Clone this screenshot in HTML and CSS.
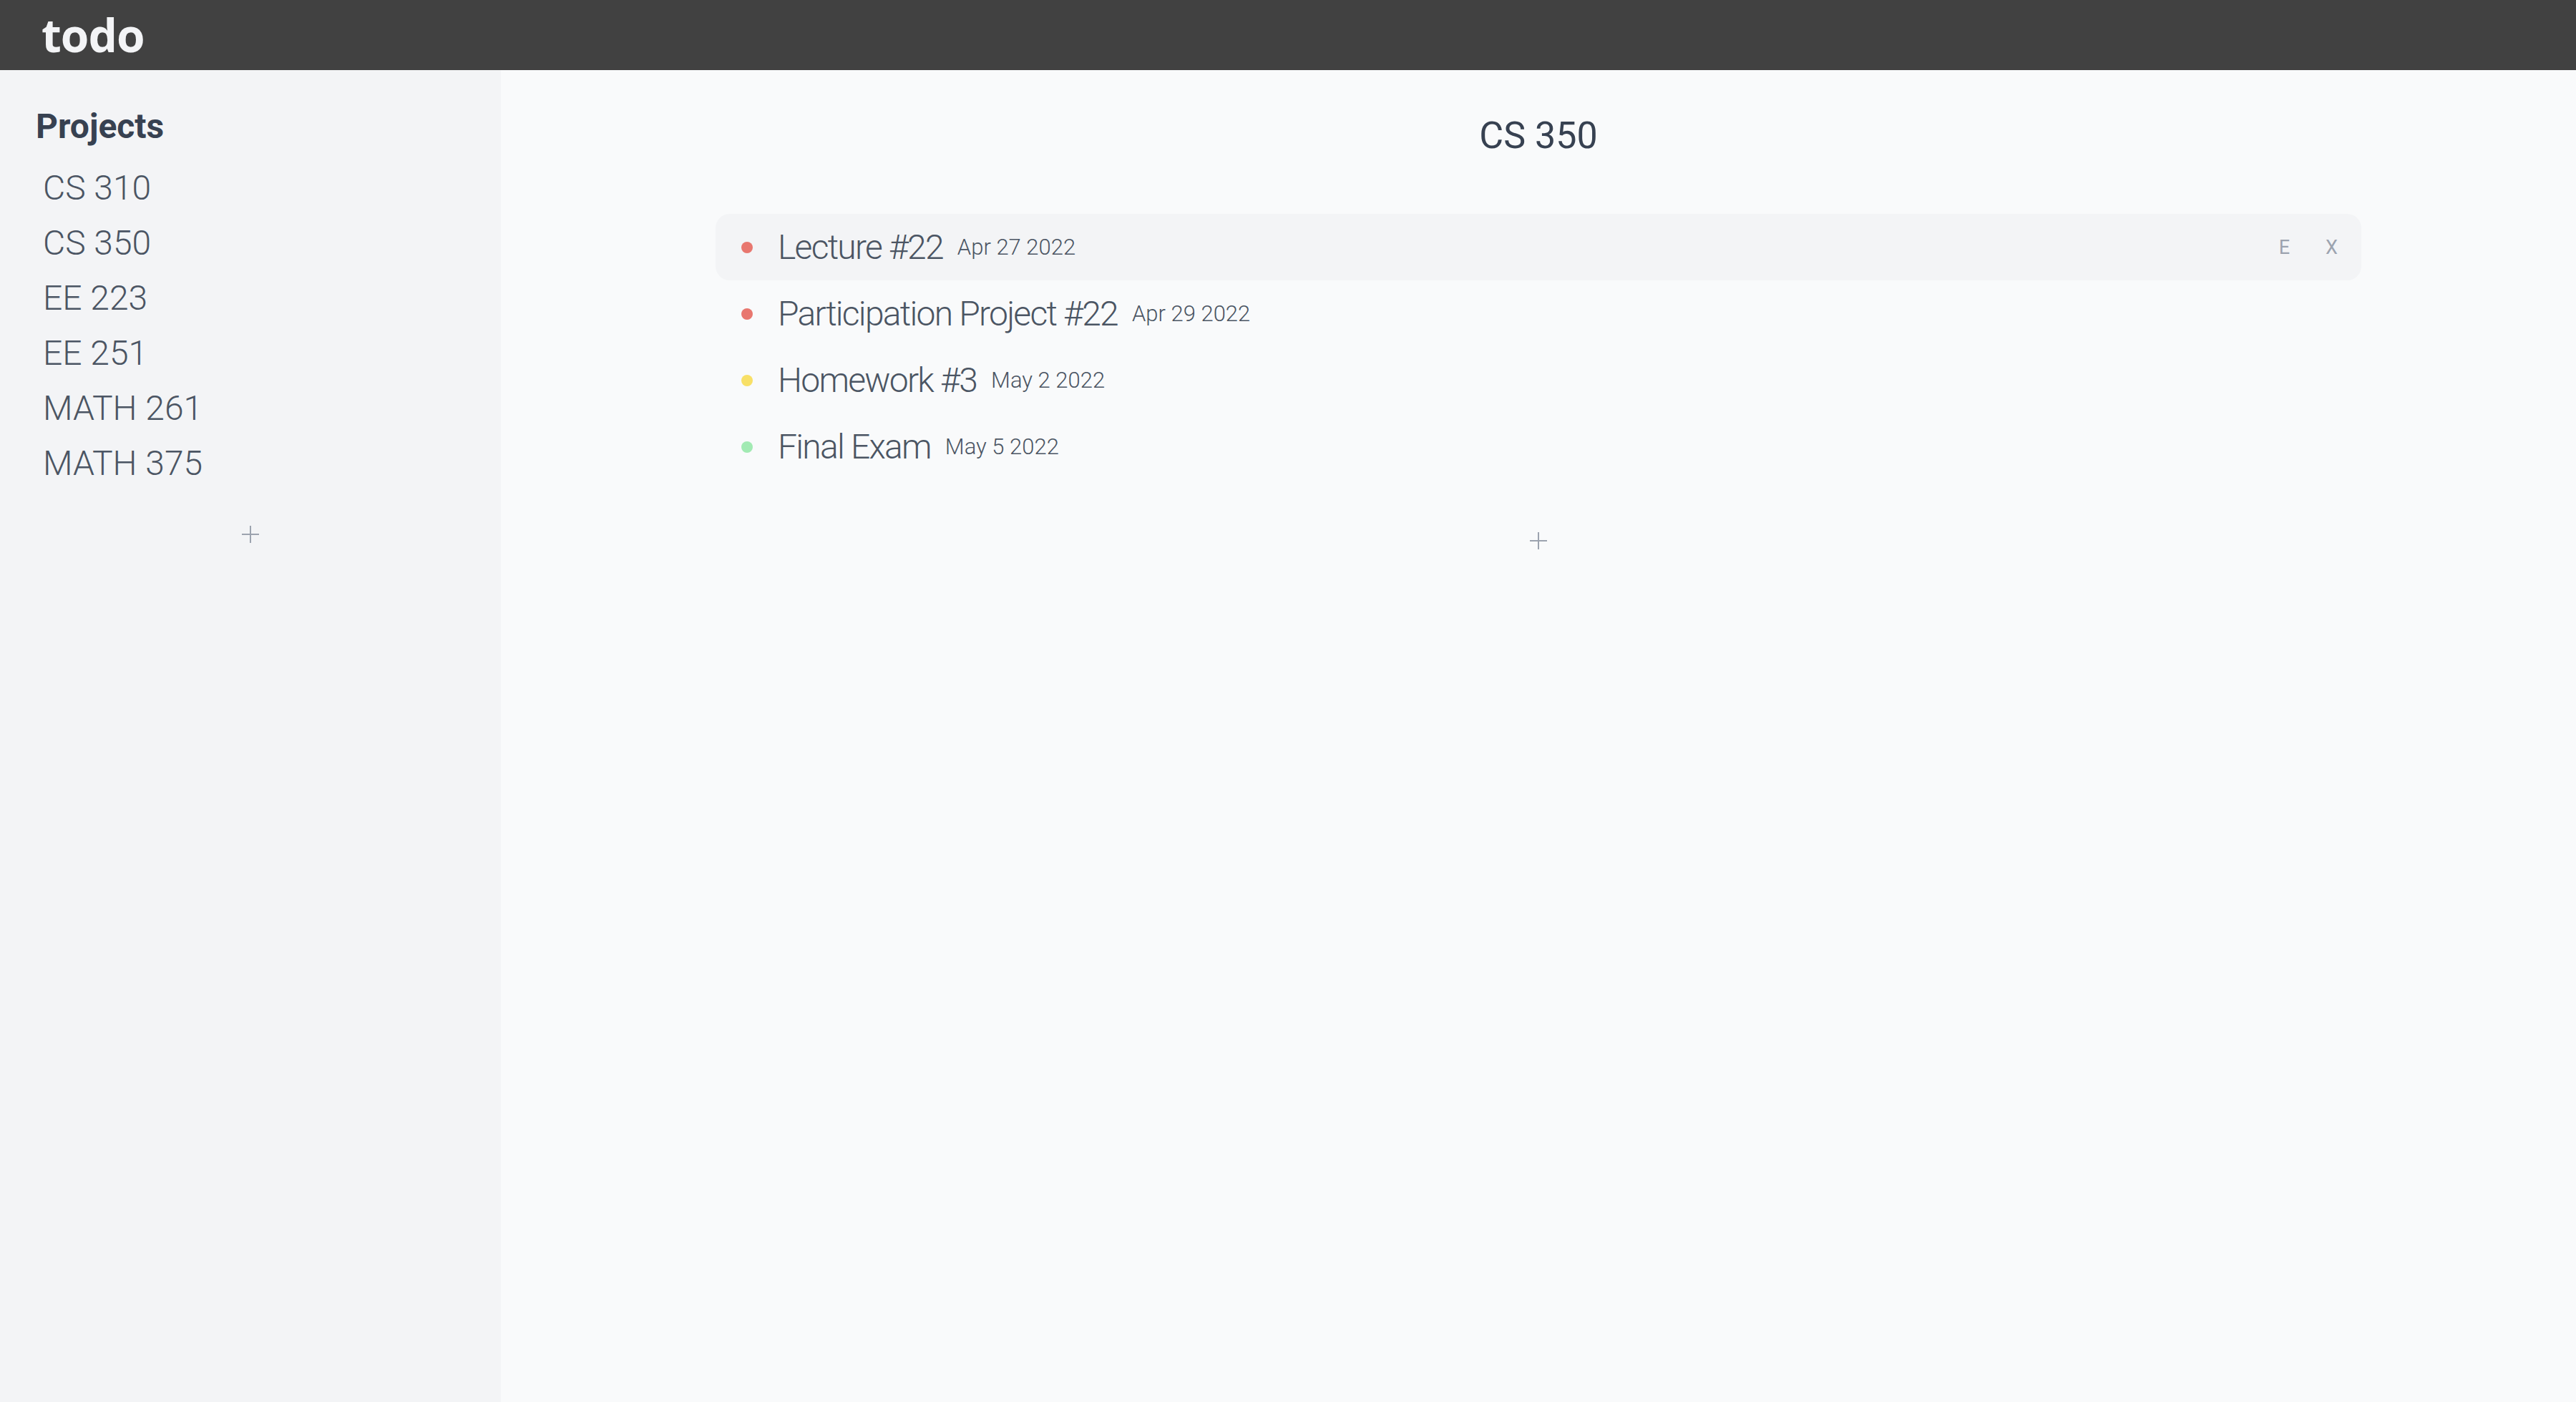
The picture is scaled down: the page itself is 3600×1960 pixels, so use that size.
FILE: index.html
```html
<!DOCTYPE html>
<html lang="en">
<head>
<meta charset="utf-8">
<title>todo</title>
<link rel="stylesheet" href="styles.css">
</head>
<body>
<header class="topbar">
  <span class="logo">todo</span>
</header>
<div class="layout">
  <aside class="sidebar">
    <h2 class="sidebar-title">Projects</h2>
    <ul class="project-list">
      <li class="project">CS 310</li>
      <li class="project">CS 350</li>
      <li class="project">EE 223</li>
      <li class="project">EE 251</li>
      <li class="project">MATH 261</li>
      <li class="project">MATH 375</li>
    </ul>
    <button class="add-btn add-project" aria-label="Add project">
      <svg width="24" height="24" viewBox="0 0 24 24"><path d="M12 0v24M0 12h24" stroke="#9ca3af" stroke-width="2" fill="none"/></svg>
    </button>
  </aside>
  <main class="content">
    <h1 class="content-title">CS 350</h1>
    <ul class="task-list">
      <li class="task task-active">
        <span class="dot dot-red"></span>
        <span class="task-name">Lecture #22</span>
        <span class="task-date">Apr 27 2022</span>
        <span class="task-actions">
          <button class="action">E</button>
          <button class="action">X</button>
        </span>
      </li>
      <li class="task">
        <span class="dot dot-red"></span>
        <span class="task-name">Participation Project #22</span>
        <span class="task-date">Apr 29 2022</span>
      </li>
      <li class="task">
        <span class="dot dot-yellow"></span>
        <span class="task-name">Homework #3</span>
        <span class="task-date">May 2 2022</span>
      </li>
      <li class="task">
        <span class="dot dot-green"></span>
        <span class="task-name">Final Exam</span>
        <span class="task-date">May 5 2022</span>
      </li>
    </ul>
    <button class="add-btn add-task" aria-label="Add task">
      <svg width="24" height="24" viewBox="0 0 24 24"><path d="M12 0v24M0 12h24" stroke="#9ca3af" stroke-width="2" fill="none"/></svg>
    </button>
  </main>
</div>
</body>
</html>
```

FILE: styles.css
```css
* { box-sizing: border-box; }

html, body {
  margin: 0;
  padding: 0;
}

body {
  font-family: Roboto, "Liberation Sans", sans-serif;
  background: #f9fafb;
  color: #4b5563;
}

.topbar {
  height: 98px;
  background: #414141;
  display: flex;
  align-items: center;
  padding-left: 58px;
}

.logo {
  font-family: "Open Sans", "DejaVu Sans", sans-serif;
  font-weight: 700;
  font-size: 64px;
  color: #f3f4f6;
  letter-spacing: -1px;
  line-height: 1;
}

.layout {
  display: flex;
  min-height: calc(100vh - 98px);
}

.sidebar {
  width: 700px;
  flex: 0 0 700px;
  background: #f3f4f6;
  padding: 50px 0 0 50px;
  display: flex;
  flex-direction: column;
}

.sidebar-title {
  margin: 0;
  font-size: 48px;
  line-height: 58px;
  font-weight: 700;
  color: #374151;
}

.project-list {
  list-style: none;
  margin: 18px 0 0;
  padding: 0 0 0 10px;
}

.project {
  font-size: 48px;
  line-height: 77px;
  font-weight: 300;
  color: #4b5563;
}

.add-btn {
  border: 0;
  background: none;
  padding: 0;
  width: 24px;
  height: 24px;
  display: block;
  cursor: pointer;
}

.add-btn svg { display: block; }

.add-project {
  margin: 49px 0 0 288px;
}

.content {
  flex: 1;
  background: #f9fafb;
  padding-top: 61px;
  display: flex;
  flex-direction: column;
  align-items: center;
}

.content-title {
  margin: 0;
  font-size: 52px;
  line-height: 62px;
  font-weight: 400;
  color: #374151;
}

.task-list {
  list-style: none;
  margin: 78px 0 0;
  padding: 0;
  width: 2300px;
}

.task {
  height: 93px;
  display: flex;
  align-items: center;
  padding: 0 33px 0 36px;
  border-radius: 20px;
}

.task-active {
  background: #f3f4f6;
}

.dot {
  width: 16px;
  height: 16px;
  border-radius: 50%;
  flex: 0 0 16px;
  margin-right: 35px;
}

.dot-red { background: #e8776f; }
.dot-yellow { background: #f8e067; }
.dot-green { background: #a2eab3; }

.task-name {
  font-size: 48px;
  font-weight: 300;
  letter-spacing: -1.75px;
  color: #4b5563;
}

.task-date {
  font-size: 31px;
  font-weight: 300;
  color: #4b5563;
  margin-left: 20px;
}

.task-actions {
  margin-left: auto;
  display: flex;
  gap: 50px;
}

.action {
  border: 0;
  background: none;
  padding: 0;
  font-family: Roboto, "Liberation Sans", sans-serif;
  font-size: 27px;
  color: #9ca3af;
  cursor: pointer;
}

.add-task {
  margin-top: 73px;
}
```
